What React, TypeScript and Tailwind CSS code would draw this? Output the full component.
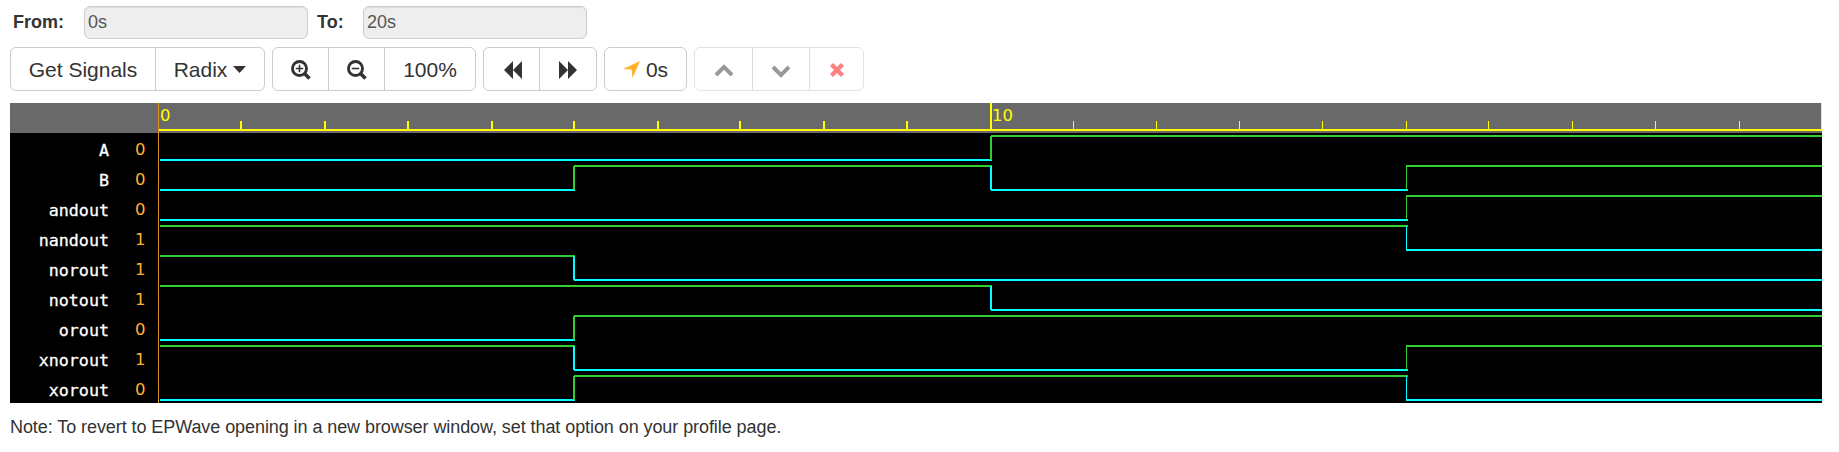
import { ReactNode } from "react";

const X = [0, 415, 832, 1247, 1663];
const TICKS = [81, 165, 248, 332, 414, 498, 580, 664, 747];
const LATE_TICKS = [914, 997, 1080, 1163, 1247, 1329, 1413, 1496, 1580];

const signals = [
  { name: "A", bits: [0, 0, 1, 1] },
  { name: "B", bits: [0, 1, 0, 1] },
  { name: "andout", bits: [0, 0, 0, 1] },
  { name: "nandout", bits: [1, 1, 1, 0] },
  { name: "norout", bits: [1, 0, 0, 0] },
  { name: "notout", bits: [1, 1, 0, 0] },
  { name: "orout", bits: [0, 1, 1, 1] },
  { name: "xnorout", bits: [1, 0, 0, 1] },
  { name: "xorout", bits: [0, 1, 1, 0] },
];

const LIME = "#32cd32";
const CYAN = "#00ffff";

function Wave({ bits }: { bits: number[] }) {
  return (
    <svg width="1663" height="30" shapeRendering="crispEdges" className="block">
      {bits.map((b, i) => {
        const start = i === 0 ? 1 : X[i];
        const end = i < 3 && bits[i + 1] !== b ? X[i + 1] + (i === 2 ? 2 : 1) : X[i + 1];
        return <rect key={i} x={start} y={b ? 2 : 26} width={end - start} height="2" fill={b ? LIME : CYAN} />;
      })}
      {bits.map((b, i) =>
        i > 0 && bits[i - 1] !== b ? (
          <rect key={i} x={i === 3 ? X[i] : X[i] - 1} y="3" width={i === 3 ? 1 : 2} height="24" fill={b ? LIME : CYAN} />
        ) : null,
      )}
    </svg>
  );
}

function Ruler() {
  return (
    <svg width="1663" height="30" shapeRendering="crispEdges" className="block">
      <rect x="0" y="26" width="1663" height="2" fill="#ff0" />
      {TICKS.map((x) => <rect key={x} x={x} y="18" width="2" height="9" fill="#ff0" />)}
      <rect x="831" y="0" width="2" height="27" fill="#ff0" />
      {LATE_TICKS.map((x) => <rect key={x} x={x} y="18" width="1" height="9" fill="#ff0" />)}
      <rect x="1662" y="0" width="1" height="28" fill="#ff0" />
      <g fill="#ff0" fontFamily="DejaVu Sans, sans-serif" fontSize="16.5">
        <text x="1" y="18">0</text>
        <text x="833" y="18">10</text>
      </g>
    </svg>
  );
}

function Group({ children, faded }: { children: ReactNode; faded?: boolean }) {
  return (
    <div className={`flex h-11 divide-x rounded-md border bg-white ${faded ? "divide-[#dcdcdc] border-[#e3e3e3]" : "divide-[#ccc] border-[#ccc]"}`}>
      {children}
    </div>
  );
}

function Btn({ w, children }: { w: string; children: ReactNode }) {
  return (
    <button className={`flex items-center justify-center whitespace-nowrap pt-px text-[21px] leading-[21px] text-[#333] ${w}`}>
      {children}
    </button>
  );
}

function Magnifier({ plus }: { plus?: boolean }) {
  return (
    <svg width="20" height="20" viewBox="0 0 20 20" fill="none" stroke="#333">
      <circle cx="8.5" cy="8.5" r="7" strokeWidth="2.9" />
      <path d="M13.5 13.5 18.5 18.5" strokeWidth="3.6" />
      <path d={plus ? "M4.8 8.5h7.4M8.5 4.8v7.4" : "M4.8 8.5h7.4"} strokeWidth="1.6" />
    </svg>
  );
}

export default function App() {
  return (
    <div className="h-[452px] w-[1839px] overflow-hidden bg-white pl-[10px] pt-[6px] font-['Liberation_Sans',Arial,sans-serif] text-[#333]">
      <div className="flex h-[33px] items-center text-[18px]">
        <label className="w-[74px] pl-[3px] font-bold">From:</label>
        <input disabled defaultValue="0s" className="h-[33px] w-[224px] rounded-md border border-[#ccc] bg-[#eee] px-[3px] pb-px text-[#555] shadow-[inset_0_1px_1px_rgba(0,0,0,0.075)]" />
        <label className="w-[55px] pl-[9px] font-bold">To:</label>
        <input disabled defaultValue="20s" className="h-[33px] w-[224px] rounded-md border border-[#ccc] bg-[#eee] px-[3px] pb-px text-[#555] shadow-[inset_0_1px_1px_rgba(0,0,0,0.075)]" />
      </div>
      <div className="mt-2 flex gap-[7px]">
        <Group>
          <Btn w="w-[145px]">Get Signals</Btn>
          <Btn w="w-[108px]">
            Radix
            <svg width="13" height="7" viewBox="0 0 13 7" className="ml-[6px]"><path d="M0 0h13L6.5 7z" fill="#333" /></svg>
          </Btn>
        </Group>
        <Group>
          <Btn w="w-[56px]"><Magnifier plus /></Btn>
          <Btn w="w-[56px]"><Magnifier /></Btn>
          <Btn w="w-[90px]">100%</Btn>
        </Group>
        <Group>
          <Btn w="w-[56px]"><svg width="18" height="18" viewBox="0 0 18 18" fill="#333" className="ml-[3px]"><path d="M0 9 9 0v18zM9 9l9-9v18z" /></svg></Btn>
          <Btn w="w-[56px]"><svg width="18" height="18" viewBox="0 0 18 18" fill="#333"><path d="M0 0l9 9-9 9zM9 0l9 9-9 9z" /></svg></Btn>
        </Group>
        <Group>
          <Btn w="w-[81px]">
            <svg width="17" height="17" viewBox="0 0 17 17" className="mr-[6px]"><path d="M17 0 9.5 17 8.5 8.5 0 8z" fill="#ffb22e" /></svg>
            0s
          </Btn>
        </Group>
        <Group faded>
          <Btn w="w-[58px]"><svg width="20" height="20" viewBox="0 0 20 20" fill="none" stroke="#999" strokeWidth="4"><path d="M2 15l8-8 8 8" /></svg></Btn>
          <Btn w="w-[57px]"><svg width="20" height="20" viewBox="0 0 20 20" fill="none" stroke="#999" strokeWidth="4"><path d="M2 7l8 8 8-8" /></svg></Btn>
          <Btn w="w-[53px]"><svg width="16" height="16" viewBox="0 0 16 16" fill="none" stroke="#ff8080" strokeWidth="4.4"><path d="M2.5 2.5l11 11M13.5 2.5l-11 11" /></svg></Btn>
        </Group>
      </div>
      <div className="mt-[12px] flex h-[300px] w-[1812px] bg-black">
        <div className="w-[148px]">
          <div className="h-[30px] bg-[#696969]" />
          {signals.map((s) => (
            <div key={s.name} className="flex h-[30px] items-center justify-end pt-[4px] text-[16.7px] leading-[30px]">
              <span className="font-['DejaVu_Sans_Mono',monospace] text-white [-webkit-text-stroke:0.3px_white]">{s.name}</span>
              <span className="w-[49px] pl-[26px] font-['DejaVu_Sans',sans-serif] text-[16.5px] text-[#ffb030]">{s.bits[0]}</span>
            </div>
          ))}
        </div>
        <div className="w-px bg-[#db9422]" />
        <div className="w-[1663px]">
          <div className="bg-[#696969]"><Ruler /></div>
          {signals.map((s) => <Wave key={s.name} bits={s.bits} />)}
        </div>
      </div>
      <p className="mt-[12px] text-[18px] leading-[24px] tracking-[-0.075px]">Note: To revert to EPWave opening in a new browser window, set that option on your profile page.</p>
    </div>
  );
}
